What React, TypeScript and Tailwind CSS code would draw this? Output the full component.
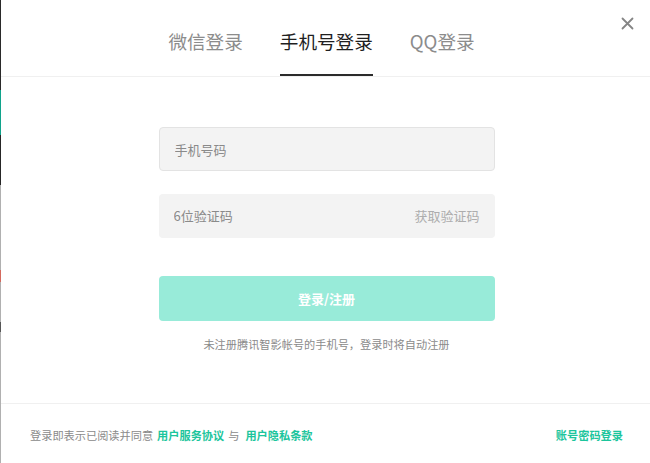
import React, { useState } from 'react';

const font = "font-['Noto_Sans_CJK_SC','Noto_Sans',sans-serif]";

const App: React.FC = () => {
  const [tab, setTab] = useState(1);
  const [phone, setPhone] = useState('');
  const [code, setCode] = useState('');
  const tabs = ['微信登录', '手机号登录', 'QQ登录'];

  return (
    <div className={`flex h-[463px] w-[650px] bg-white ${font}`}>
      {/* page behind the dialog, visible as a 1px strip */}
      <div className="flex w-px flex-col">
        <div className="h-[90px] bg-[#2a2a2a]" />
        <div className="h-[45px] bg-[#10a38b]" />
        <div className="h-[50px] bg-[#262626]" />
        <div className="h-[85px] bg-[#b0b0b0]" />
        <div className="h-[12px] bg-[#d46a5e]" />
        <div className="h-[40px] bg-[#b0b0b0]" />
        <div className="h-[10px] bg-[#555]" />
        <div className="flex-1 bg-[#b0b0b0]" />
      </div>

      <div className="relative flex flex-1 flex-col rounded-l-[4px] bg-white">
        <button className="absolute right-[15px] top-[16px] p-[1px] text-[#858585]">
          <svg width="13" height="13" viewBox="0 0 13 13" fill="none" stroke="currentColor" strokeWidth="1.8" strokeLinecap="round">
            <path d="M1.5 1.5l10 10M11.5 1.5l-10 10" />
          </svg>
        </button>

        <div className="flex h-[77px] justify-center gap-[37px] border-b border-[#f0f0f0] pr-[8px]">
          {tabs.map((t, i) => (
            <button
              key={t}
              onClick={() => setTab(i)}
              className={`flex h-full items-center border-b-2 pt-[8px] text-[18.6px] leading-[26px] ${
                tab === i ? 'border-[#2b2b2b] text-[#1f1f1f]' : 'border-transparent text-[#8c8c8c]'
              }`}
            >
              {t}
            </button>
          ))}
        </div>

        <div className="flex flex-1 flex-col items-center pl-[2px] pt-[50px]">
          <div className="w-[336px]">
            <input
              value={phone}
              onChange={(e) => setPhone(e.target.value)}
              placeholder="手机号码"
              className="h-[44px] w-full rounded-[4px] border border-[#e3e3e3] bg-[#f3f3f3] px-[15px] text-[13px] text-[#333] outline-none placeholder:text-[#8a8a8a]"
            />
            <div className="mt-[23px] flex h-[44px] items-center rounded-[4px] bg-[#f3f3f3] px-[15px]">
              <input
                value={code}
                onChange={(e) => setCode(e.target.value)}
                placeholder="6位验证码"
                className="flex-1 bg-transparent text-[13px] text-[#333] outline-none placeholder:text-[#8a8a8a]"
              />
              <span className="text-[13px] text-[#adadad]">获取验证码</span>
            </div>
            <button className="mt-[38px] h-[45px] w-full rounded-[4px] bg-[#98ebd9] text-[13px] font-bold text-white">
              登录/注册
            </button>
            <p className="mt-[15px] text-center text-[11.2px] leading-[16px] text-[#8a8a8a]">
              未注册腾讯智影帐号的手机号，登录时将自动注册
            </p>
          </div>
        </div>

        <div className="flex h-[60px] items-center justify-between border-t border-[#f0f0f0] pl-[29px] pr-[27px] pt-[3px] text-[11.2px]">
          <div className="text-[#8a8a8a]">
            登录即表示已阅读并同意
            <span className="mx-[4px] font-bold text-[#1cc59c]">用户服务协议</span>
            与
            <span className="ml-[6px] font-bold text-[#1cc59c]">用户隐私条款</span>
          </div>
          <span className="font-bold text-[#1cc59c]">账号密码登录</span>
        </div>
      </div>
    </div>
  );
};

export default App;
